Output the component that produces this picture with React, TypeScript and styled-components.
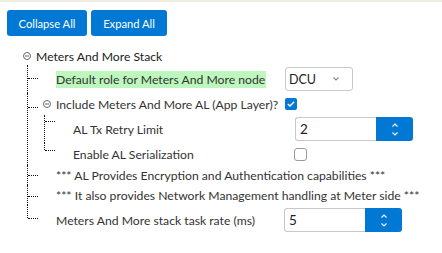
import React from "react";
import styled, { createGlobalStyle } from "styled-components";

const Global = createGlobalStyle`
  html, body { margin: 0; padding: 0; background: #fff; }
  body { font-family: Lato, "Open Sans", sans-serif; }
`;

const Page = styled.div`
  width: 442px;
  height: 253px;
  overflow: hidden;
  background: #fff;
  border-top: 2px solid #f0ede2;
  box-sizing: border-box;
`;

const Toolbar = styled.div`
  display: flex;
  gap: 4px;
  padding: 8px 0 0 7px;
`;

const Button = styled.button<{ $w: number }>`
  width: ${(p) => p.$w}px;
  height: 26px;
  border: none;
  border-radius: 3px;
  background: #0078d4;
  color: #fff;
  font-family: inherit;
  font-size: 11.2px;
  padding: 0;
`;

const Tree = styled.div`
  margin-top: 11px;
  color: #333;
  font-size: 12.2px;
`;

const Head = styled.div<{ $h: number; $pl?: number }>`
  display: flex;
  align-items: center;
  height: ${(p) => p.$h}px;
  padding-left: ${(p) => p.$pl ?? 0}px;
  white-space: nowrap;
`;

const Children = styled.div<{ $ml: number }>`
  position: relative;
  margin-left: ${(p) => p.$ml}px;
`;

const Item = styled.div<{ $connY: number; $last?: boolean }>`
  position: relative;
  padding-left: 16px;
  &::before {
    content: "";
    position: absolute;
    left: 0;
    top: 0;
    height: ${(p) => (p.$last ? `${p.$connY}px` : "100%")};
    border-left: 1px dotted #111;
  }
  &::after {
    content: "";
    position: absolute;
    left: 1px;
    top: ${(p) => p.$connY}px;
    width: 10px;
    border-top: 1px dotted #111;
  }
`;

const ToggleBox = styled.svg`
  flex: none;
  width: 8px;
  height: 8px;
  margin-right: 5px;
`;

const Spacer = styled.span`
  flex: none;
  width: 13px;
`;

const LabelCell = styled.div<{ $w: number }>`
  flex: none;
  width: ${(p) => p.$w}px;
`;

const Text = styled.span<{ $hl?: boolean; $dark?: boolean }>`
  display: inline-block;
  line-height: 17px;
  color: ${(p) => (p.$dark ? "#222" : "#333")};
  background: ${(p) => (p.$hl ? "#bdf7bd" : "transparent")};
  padding-right: ${(p) => (p.$hl ? "1px" : "0")};
`;

const SelectBox = styled.div`
  box-sizing: border-box;
  width: 68px;
  height: 24px;
  border: 1px solid #c8c8c8;
  border-radius: 3px;
  display: flex;
  align-items: center;
  justify-content: space-between;
  padding: 0 13px 0 3px;
  font-size: 12.5px;
  color: #222;
  background: #fff;
`;

const Check = styled.div<{ $on?: boolean; $size: number }>`
  box-sizing: border-box;
  width: ${(p) => p.$size}px;
  height: ${(p) => p.$size}px;
  border-radius: ${(p) => (p.$on ? 2 : 3)}px;
  background: ${(p) => (p.$on ? "#0078d4" : "#fff")};
  border: ${(p) => (p.$on ? "none" : "1px solid #9a9a9a")};
  display: flex;
  align-items: center;
  justify-content: center;
`;

const NumGroup = styled.div`
  display: flex;
  width: 118px;
  height: 24px;
`;

const NumField = styled.div`
  box-sizing: border-box;
  flex: 1;
  border: 1px solid #c8c8c8;
  border-right: none;
  border-radius: 3px 0 0 3px;
  padding-left: 4px;
  display: flex;
  align-items: center;
  font-size: 13.5px;
  color: #222;
`;

const Spin = styled.div`
  width: 37px;
  background: #0078d4;
  border-radius: 0 3px 3px 0;
  display: flex;
  flex-direction: column;
  align-items: center;
  justify-content: center;
  gap: 5px;
`;

const Toggle = () => (
  <ToggleBox viewBox="0 0 8 8">
    <circle cx="4" cy="4" r="3.5" fill="none" stroke="#6b6b6b" strokeWidth="1" />
    <line x1="2" y1="4" x2="6" y2="4" stroke="#6b6b6b" strokeWidth="1" />
  </ToggleBox>
);

const Chevron = ({ up, color, w = 6 }: { up?: boolean; color: string; w?: number }) => (
  <svg width={w} height={4} viewBox="0 0 6 4">
    <polyline
      points={up ? "0.5,3.5 3,1 5.5,3.5" : "0.5,0.5 3,3 5.5,0.5"}
      fill="none"
      stroke={color}
      strokeWidth="1.2"
    />
  </svg>
);

const NumberInput = ({ value }: { value: string }) => (
  <NumGroup>
    <NumField>{value}</NumField>
    <Spin>
      <Chevron up color="#fff" />
      <Chevron color="#fff" />
    </Spin>
  </NumGroup>
);

export default function App() {
  return (
    <Page>
      <Global />
      <Toolbar>
        <Button $w={80}>Collapse All</Button>
        <Button $w={76}>Expand All</Button>
      </Toolbar>
      <Tree>
        <Head $h={18} $pl={23}>
          <Toggle />
          <Text $dark>Meters And More Stack</Text>
        </Head>
        <Children $ml={27}>
          <Item $connY={13}>
            <Head $h={28}>
              <Spacer />
              <LabelCell $w={229}>
                <Text $hl>Default role for Meters And More node</Text>
              </LabelCell>
              <SelectBox>
                DCU
                <Chevron color="#888" />
              </SelectBox>
            </Head>
          </Item>
          <Item $connY={14}>
            <Head $h={22}>
              <Toggle />
              <LabelCell $w={229}>
                <Text>Include Meters And More AL (App Layer)?</Text>
              </LabelCell>
              <Check $on $size={12}>
                <svg width="8" height="6" viewBox="0 0 8 6">
                  <polyline points="0.8,3 3,5 7.2,0.8" fill="none" stroke="#fff" strokeWidth="1.4" />
                </svg>
              </Check>
            </Head>
            <Children $ml={1}>
              <Item $connY={6}>
                <Head $h={28}>
                  <Spacer />
                  <LabelCell $w={222}>
                    <Text>AL Tx Retry Limit</Text>
                  </LabelCell>
                  <NumberInput value="2" />
                </Head>
              </Item>
              <Item $connY={7} $last>
                <Head $h={22}>
                  <Spacer />
                  <LabelCell $w={221}>
                    <Text>Enable AL Serialization</Text>
                  </LabelCell>
                  <Check $size={13} />
                </Head>
              </Item>
            </Children>
          </Item>
          <Item $connY={10}>
            <Head $h={20}>
              <Spacer />
              <Text>*** AL Provides Encryption and Authentication capabilities ***</Text>
            </Head>
          </Item>
          <Item $connY={11}>
            <Head $h={20}>
              <Spacer />
              <Text>*** It also provides Network Management handling at Meter side ***</Text>
            </Head>
          </Item>
          <Item $connY={13} $last>
            <Head $h={30}>
              <Spacer />
              <LabelCell $w={228}>
                <Text>Meters And More stack task rate (ms)</Text>
              </LabelCell>
              <NumberInput value="5" />
            </Head>
          </Item>
        </Children>
      </Tree>
    </Page>
  );
}
